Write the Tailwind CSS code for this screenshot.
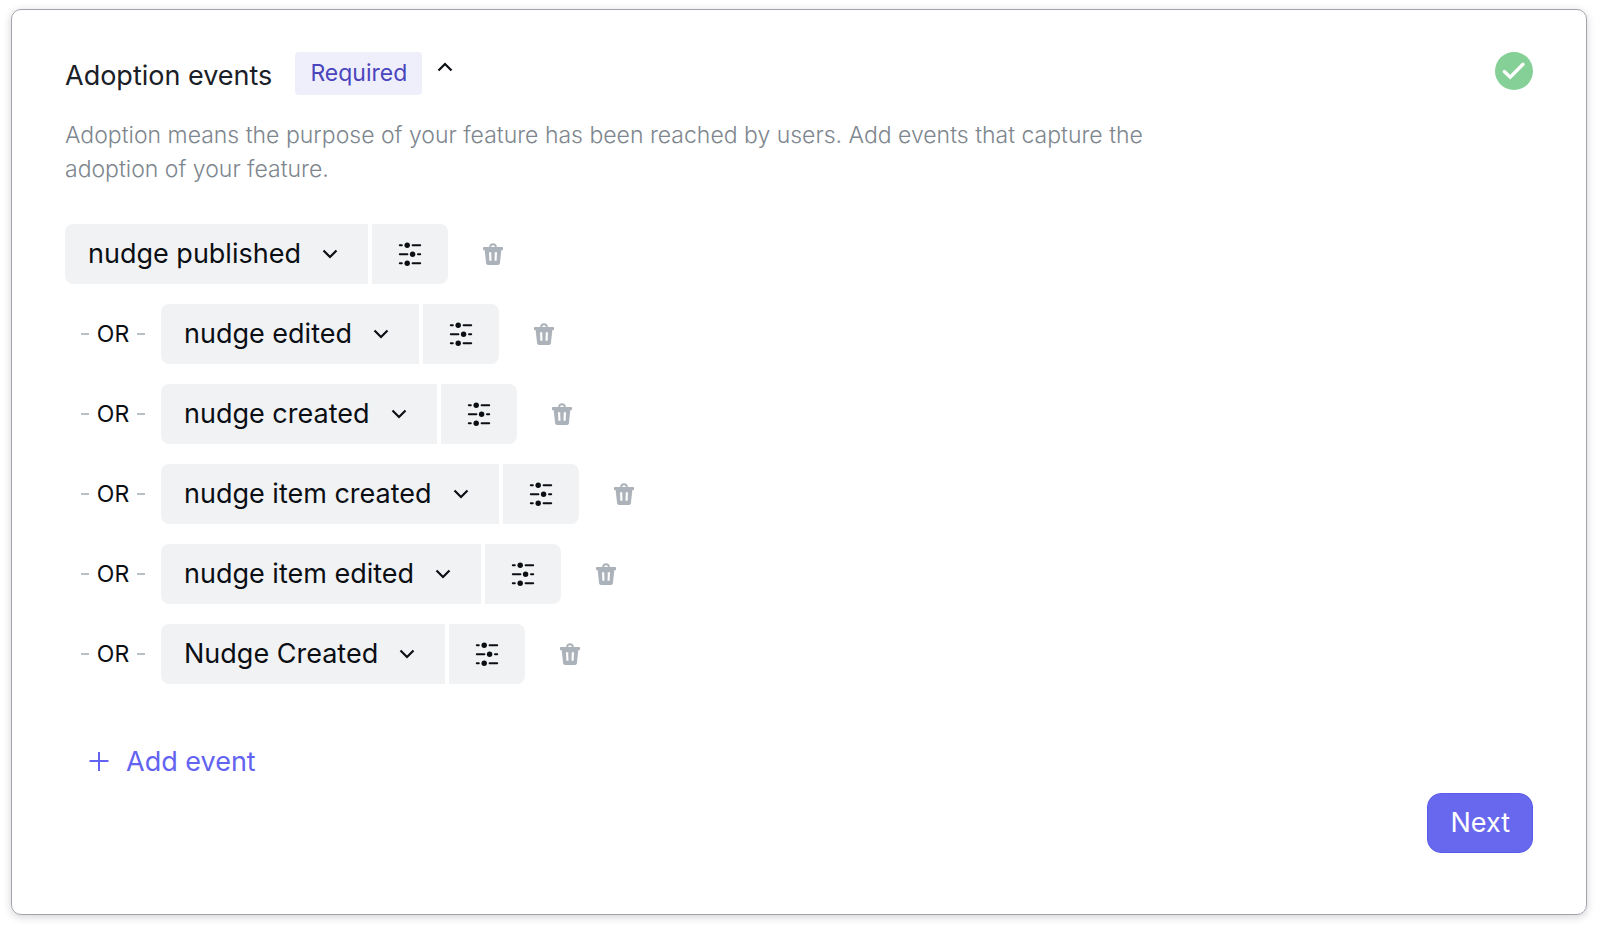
<!DOCTYPE html>
<html lang="en">
<head>
  <meta charset="UTF-8" />
  <meta name="viewport" content="width=device-width, initial-scale=1.0">
  <title>Adoption events</title>
  <script src="https://cdn.jsdelivr.net/npm/@tailwindcss/browser@4"></script>
</head>
<body class="min-h-screen flex bg-white font-['Inter',sans-serif] text-[#0b0f14]">
  <!-- Shared icons -->
  <svg class="hidden">
    <symbol id="chevron" viewBox="0 0 16 16">
      <path d="M1.5 4.5 8 11l6.5-6.5" fill="none" stroke="currentColor" stroke-width="2.2" />
    </symbol>
    <symbol id="sliders" viewBox="0 0 24 24">
      <path d="M1.8 3.2h2M14.6 3.2h7.6M1.8 12.2h7.6M20 12.2h2.2M1.8 21.2h2M14.6 21.2h7.6" fill="none" stroke="currentColor" stroke-width="2" stroke-linecap="round" />
      <circle cx="9.2" cy="3.2" r="2.7" fill="currentColor" />
      <circle cx="14.6" cy="12.2" r="2.7" fill="currentColor" />
      <circle cx="9.2" cy="21.2" r="2.7" fill="currentColor" />
    </symbol>
    <symbol id="trash" viewBox="0 0 20 22">
      <path d="M7.2 5V3.8a2.8 2.6 0 0 1 5.6 0V5" fill="none" stroke="currentColor" stroke-width="1.9" />
      <path d="M.8 4h18.4a.8.8 0 0 1 .8.8v1.600a.8.8 0 0 1-.8.8h-.9l-1.4 13a2 2 0 0 1-2 1.8H5.100a2 2 0 0 1-2-1.8L1.700 7.200H.8a.8.8 0 0 1-.8-.8V4.800a.8.8 0 0 1 .8-.8zM6 9.200l.4 8.600h2.100l-.3-8.600zM11.800 9.200l-.3 8.600h2.100l.4-8.600z" fill="currentColor" fill-rule="evenodd" />
    </symbol>
  </svg>

  <main class="flex-1 flex flex-col mt-[9px] mr-[13px] mb-[13px] ml-[11px] px-[53px] pt-[42px] pb-[60px] border border-[#a0a5ac] rounded-[10px] shadow-[0_2px_8px_rgba(0,0,0,0.18)]">
    <header class="flex items-start">
      <h1 class="mt-2 text-[27px] leading-[32px] text-[#1a2027]">Adoption events</h1>
      <span class="ml-[23px] px-[15px] h-[43px] rounded-sm bg-[#efeffc] text-[23px] leading-[42px] text-[#4b45bd]">Required</span>
      <button type="button" aria-label="Collapse" class="ml-[15px] mt-[7px]">
        <svg class="size-4 rotate-180"><use href="#chevron" /></svg>
      </button>
      <svg class="ml-auto size-[38px]" viewBox="0 0 38 38" role="img" aria-label="Complete">
        <circle cx="19" cy="19" r="19" fill="#85d096" />
        <path d="m9.3 19.6 5.900 5.600L28 12.300" fill="none" stroke="#fff" stroke-width="3.4" stroke-linecap="round" />
      </svg>
    </header>

    <p class="mt-[23px] max-w-[1120px] text-[23px] leading-[34px] font-[340] text-[#7e868e]">Adoption means the purpose of your feature has been reached by users. Add events that capture the adoption of your feature.</p>

    <ul class="mt-[38px] flex flex-col gap-5 text-[27px]">
      <li class="flex items-center">
        <div class="grid items-center">
          <select aria-label="Event 1" class="col-start-1 row-start-1 appearance-none field-sizing-content h-[60px] pl-[23px] pr-[67px] rounded-l-lg bg-[#f1f2f4]"><option>nudge published</option></select>
          <svg class="col-start-1 row-start-1 justify-self-end mr-[30px] size-4 pointer-events-none"><use href="#chevron" /></svg>
        </div>
        <button type="button" aria-label="Filters" class="ml-1 w-[76px] h-[60px] flex items-center justify-center rounded-r-lg bg-[#f1f2f4]"><svg class="size-6"><use href="#sliders" /></svg></button>
        <button type="button" aria-label="Delete" class="ml-[35px] text-[#abb2ba]"><svg class="w-5 h-[22px]"><use href="#trash" /></svg></button>
      </li>
      <li class="flex items-center">
        <span class="w-24 flex items-center justify-center gap-2 text-[23px]"><i class="w-2 h-0.5 bg-[#b9bfc5]"></i>OR<i class="w-2 h-0.5 bg-[#b9bfc5]"></i></span>
        <div class="grid items-center">
          <select aria-label="Event 2" class="col-start-1 row-start-1 appearance-none field-sizing-content h-[60px] pl-[23px] pr-[67px] rounded-l-lg bg-[#f1f2f4]"><option>nudge edited</option></select>
          <svg class="col-start-1 row-start-1 justify-self-end mr-[30px] size-4 pointer-events-none"><use href="#chevron" /></svg>
        </div>
        <button type="button" aria-label="Filters" class="ml-1 w-[76px] h-[60px] flex items-center justify-center rounded-r-lg bg-[#f1f2f4]"><svg class="size-6"><use href="#sliders" /></svg></button>
        <button type="button" aria-label="Delete" class="ml-[35px] text-[#abb2ba]"><svg class="w-5 h-[22px]"><use href="#trash" /></svg></button>
      </li>
      <li class="flex items-center">
        <span class="w-24 flex items-center justify-center gap-2 text-[23px]"><i class="w-2 h-0.5 bg-[#b9bfc5]"></i>OR<i class="w-2 h-0.5 bg-[#b9bfc5]"></i></span>
        <div class="grid items-center">
          <select aria-label="Event 3" class="col-start-1 row-start-1 appearance-none field-sizing-content h-[60px] pl-[23px] pr-[67px] rounded-l-lg bg-[#f1f2f4]"><option>nudge created</option></select>
          <svg class="col-start-1 row-start-1 justify-self-end mr-[30px] size-4 pointer-events-none"><use href="#chevron" /></svg>
        </div>
        <button type="button" aria-label="Filters" class="ml-1 w-[76px] h-[60px] flex items-center justify-center rounded-r-lg bg-[#f1f2f4]"><svg class="size-6"><use href="#sliders" /></svg></button>
        <button type="button" aria-label="Delete" class="ml-[35px] text-[#abb2ba]"><svg class="w-5 h-[22px]"><use href="#trash" /></svg></button>
      </li>
      <li class="flex items-center">
        <span class="w-24 flex items-center justify-center gap-2 text-[23px]"><i class="w-2 h-0.5 bg-[#b9bfc5]"></i>OR<i class="w-2 h-0.5 bg-[#b9bfc5]"></i></span>
        <div class="grid items-center">
          <select aria-label="Event 4" class="col-start-1 row-start-1 appearance-none field-sizing-content h-[60px] pl-[23px] pr-[67px] rounded-l-lg bg-[#f1f2f4]"><option>nudge item created</option></select>
          <svg class="col-start-1 row-start-1 justify-self-end mr-[30px] size-4 pointer-events-none"><use href="#chevron" /></svg>
        </div>
        <button type="button" aria-label="Filters" class="ml-1 w-[76px] h-[60px] flex items-center justify-center rounded-r-lg bg-[#f1f2f4]"><svg class="size-6"><use href="#sliders" /></svg></button>
        <button type="button" aria-label="Delete" class="ml-[35px] text-[#abb2ba]"><svg class="w-5 h-[22px]"><use href="#trash" /></svg></button>
      </li>
      <li class="flex items-center">
        <span class="w-24 flex items-center justify-center gap-2 text-[23px]"><i class="w-2 h-0.5 bg-[#b9bfc5]"></i>OR<i class="w-2 h-0.5 bg-[#b9bfc5]"></i></span>
        <div class="grid items-center">
          <select aria-label="Event 5" class="col-start-1 row-start-1 appearance-none field-sizing-content h-[60px] pl-[23px] pr-[67px] rounded-l-lg bg-[#f1f2f4]"><option>nudge item edited</option></select>
          <svg class="col-start-1 row-start-1 justify-self-end mr-[30px] size-4 pointer-events-none"><use href="#chevron" /></svg>
        </div>
        <button type="button" aria-label="Filters" class="ml-1 w-[76px] h-[60px] flex items-center justify-center rounded-r-lg bg-[#f1f2f4]"><svg class="size-6"><use href="#sliders" /></svg></button>
        <button type="button" aria-label="Delete" class="ml-[35px] text-[#abb2ba]"><svg class="w-5 h-[22px]"><use href="#trash" /></svg></button>
      </li>
      <li class="flex items-center">
        <span class="w-24 flex items-center justify-center gap-2 text-[23px]"><i class="w-2 h-0.5 bg-[#b9bfc5]"></i>OR<i class="w-2 h-0.5 bg-[#b9bfc5]"></i></span>
        <div class="grid items-center">
          <select aria-label="Event 6" class="col-start-1 row-start-1 appearance-none field-sizing-content h-[60px] pl-[23px] pr-[67px] rounded-l-lg bg-[#f1f2f4]"><option>Nudge Created</option></select>
          <svg class="col-start-1 row-start-1 justify-self-end mr-[30px] size-4 pointer-events-none"><use href="#chevron" /></svg>
        </div>
        <button type="button" aria-label="Filters" class="ml-1 w-[76px] h-[60px] flex items-center justify-center rounded-r-lg bg-[#f1f2f4]"><svg class="size-6"><use href="#sliders" /></svg></button>
        <button type="button" aria-label="Delete" class="ml-[35px] text-[#abb2ba]"><svg class="w-5 h-[22px]"><use href="#trash" /></svg></button>
      </li>
    </ul>

    <button type="button" class="mt-[47px] px-6 h-[62px] self-start flex items-center gap-[17px] text-[27px] text-[#6363f1]">
      <svg class="size-5" viewBox="0 0 20 20"><path d="M10 0v19M.5 9h19" fill="none" stroke="currentColor" stroke-width="2" /></svg>
      Add event
    </button>

    <button type="button" class="px-[22px] h-[60px] self-end rounded-[14px] border border-[#5b5bea] bg-[#6868ee] text-[27px] text-white">Next</button>
  </main>
</body>
</html>
